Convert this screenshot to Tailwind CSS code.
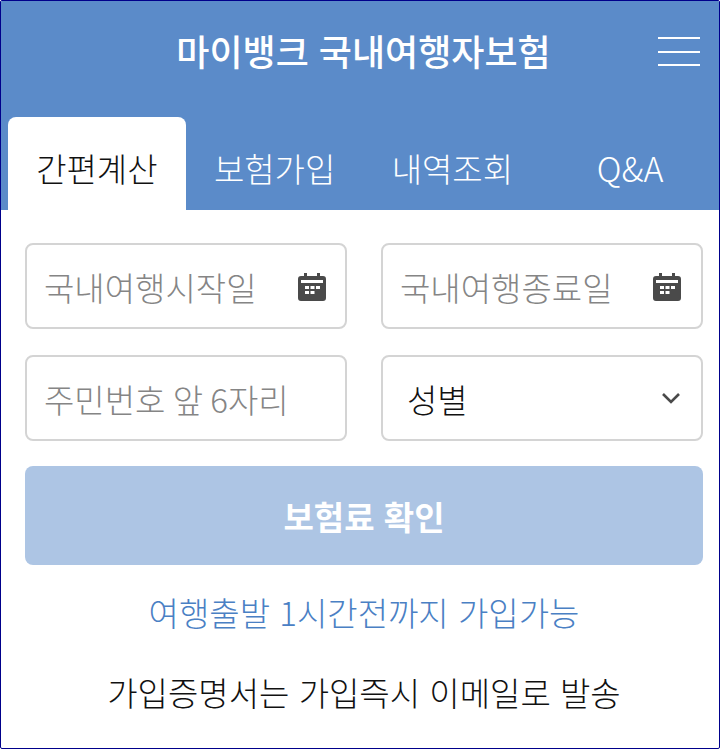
<!DOCTYPE html>
<html lang="ko">
<head>
<meta charset="utf-8">
<script src="https://cdn.jsdelivr.net/npm/@tailwindcss/browser@4"></script>
</head>
<body class="bg-white">
<div class="w-[720px] h-[749px] overflow-hidden border border-[#00008b] rounded-[2px] bg-white flex flex-col font-['Noto_Sans_CJK_KR','Noto_Sans',sans-serif]">
  <header class="h-[209px] bg-[#5b8bc9] flex flex-col shrink-0">
    <div class="h-[116px] relative flex items-start justify-center">
      <h1 class="mt-[25px] ml-[7px] text-[36px] leading-[48px] font-medium text-white">마이뱅크 국내여행자보험</h1>
      <div class="absolute right-[19px] top-[36px] w-[42px] h-[29px] flex flex-col justify-between">
        <span class="block h-[2px] bg-white"></span>
        <span class="block h-[2px] bg-white"></span>
        <span class="block h-[2px] bg-white"></span>
      </div>
    </div>
    <nav class="flex h-[93px] pl-[7px] text-[33px] leading-[44px] font-light">
      <div class="w-[178px] bg-white rounded-t-[8px] text-[#111] flex items-center justify-center pt-[8px]">간편계산</div>
      <div class="w-[178px] text-white flex items-center justify-center pt-[8px]">보험가입</div>
      <div class="w-[178px] text-white flex items-center justify-center pt-[8px]">내역조회</div>
      <div class="w-[178px] text-white flex items-center justify-center pt-[8px] text-[34px]">Q&amp;A</div>
    </nav>
  </header>
  <main class="px-[24px] pt-[33px] flex flex-col">
    <div class="grid grid-cols-[322px_322px] gap-x-[34px] gap-y-[26px]">
      <div class="h-[86px] border-2 border-[#d4d4d4] rounded-[8px] flex items-center justify-between pl-[17px] pr-[19px] pt-[2px]">
        <span class="text-[33px] text-[#858585] leading-[44px] font-light">국내여행시작일</span>
        <svg class="w-[28px] h-[28px]" viewBox="0 0 28 28" fill="#4a4a4a"><path d="M6 0h3v3h10V0h3v3h3a3 3 0 0 1 3 3v19a3 3 0 0 1-3 3H3a3 3 0 0 1-3-3V6a3 3 0 0 1 3-3h3zM3 7v3h22V7zM7 13v3h4v-3zM12.500 13v3h4v-3zM18 13v3h4v-3zM7 18v3h4v-3zM12.500 18v3h4v-3z" fill-rule="evenodd"/></svg>
      </div>
      <div class="h-[86px] border-2 border-[#d4d4d4] rounded-[8px] flex items-center justify-between pl-[17px] pr-[20px] pt-[2px]">
        <span class="text-[33px] text-[#858585] leading-[44px] font-light">국내여행종료일</span>
        <svg class="w-[28px] h-[28px]" viewBox="0 0 28 28" fill="#4a4a4a"><path d="M6 0h3v3h10V0h3v3h3a3 3 0 0 1 3 3v19a3 3 0 0 1-3 3H3a3 3 0 0 1-3-3V6a3 3 0 0 1 3-3h3zM3 7v3h22V7zM7 13v3h4v-3zM12.500 13v3h4v-3zM18 13v3h4v-3zM7 18v3h4v-3zM12.500 18v3h4v-3z" fill-rule="evenodd"/></svg>
      </div>
      <div class="h-[86px] border-2 border-[#d4d4d4] rounded-[8px] flex items-center pl-[17px] pt-[2px]">
        <span class="text-[33px] text-[#858585] leading-[44px] font-light [word-spacing:-2px]">주민번호 앞 6자리</span>
      </div>
      <div class="h-[86px] border-2 border-[#d4d4d4] rounded-[8px] flex items-center justify-between pl-[24px] pr-[21px]">
        <span class="text-[33px] text-[#111] leading-[44px] font-light pt-[2px]">성별</span>
        <svg class="w-[18px] h-[12px]" viewBox="0 0 18 12" fill="none" stroke="#4a4a4a" stroke-width="2.6"><path d="M1 2l8 8 8-8"/></svg>
      </div>
    </div>
    <button class="mt-[25px] w-[678px] h-[99px] rounded-[8px] bg-[#adc5e4] text-white text-[33px] font-bold leading-[44px] pt-[1px]">보험료 확인</button>
    <p class="mt-[25px] w-[678px] text-center text-[33px] leading-[44px] text-[#4a80c4] font-light">여행출발 1시간전까지 가입가능</p>
    <p class="mt-[36px] w-[678px] text-center text-[33px] leading-[44px] text-[#111] font-light">가입증명서는 가입즉시 이메일로 발송</p>
  </main>
</div>
</body>
</html>
